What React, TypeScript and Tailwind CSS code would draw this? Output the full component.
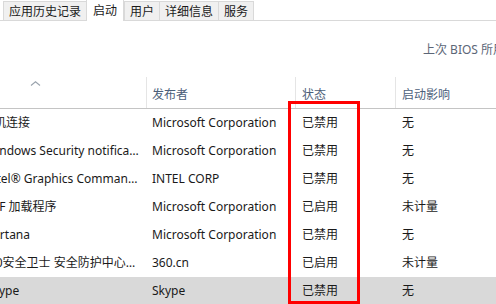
const tabs = [
  { label: "应用历史记录", active: false },
  { label: "启动", active: true },
  { label: "用户", active: false },
  { label: "详细信息", active: false },
  { label: "服务", active: false },
];

const rows = [
  { name: "手机连接", publisher: "Microsoft Corporation", status: "已禁用", impact: "无", offset: "ml-[-18px]" },
  { name: "Windows Security notification icon", publisher: "Microsoft Corporation", status: "已禁用", impact: "无", offset: "ml-[-15px]" },
  { name: "Intel® Graphics Command Center", publisher: "INTEL CORP", status: "已禁用", impact: "无", offset: "ml-[-15px]" },
  { name: "CTF 加载程序", publisher: "Microsoft Corporation", status: "已启用", impact: "未计量", offset: "ml-[-15px]" },
  { name: "Cortana", publisher: "Microsoft Corporation", status: "已禁用", impact: "无", offset: "ml-[-15px]" },
  { name: "360安全卫士 安全防护中心模块", publisher: "360.cn", status: "已启用", impact: "未计量", offset: "ml-[-18px]" },
  { name: "Skype", publisher: "Skype", status: "已禁用", impact: "无", offset: "ml-[-14px]", selected: true },
];

const font = "font-['Segoe_UI','Noto_Sans','Noto_Sans_CJK_SC',sans-serif]";

export default function App() {
  return (
    <div className={`relative w-[496px] h-[304px] overflow-hidden bg-white text-[12px] text-[#1a1a1a] ${font}`}>
      {/* tab strip */}
      <div className="flex items-end h-[21px] pl-[3px] border-b border-[#d9d9d9]">
        {tabs.map((t) =>
          t.active ? (
            <div
              key={t.label}
              className="h-[22px] mb-[-1px] px-[6px] flex items-center bg-white border-x border-t border-[#d9d9d9] leading-none"
            >
              {t.label}
            </div>
          ) : (
            <div
              key={t.label}
              className="h-[19px] px-[5px] flex items-center bg-[#f0f0f0] border-l border-t border-[#d9d9d9] last:border-r leading-none pt-[1px]"
            >
              {t.label}
            </div>
          )
        )}
      </div>

      {/* bios line */}
      <div className="h-[53px] flex items-center pl-[423px] pt-[4px] whitespace-nowrap text-[#5c6677]">
        上次 BIOS 所用时间: 0.0 秒
      </div>

      {/* header */}
      <div className="flex items-end h-[35px] border-b border-[#c4c4c4] text-[#4c607a]">
        <div className="w-[146px] h-[35px] flex justify-center pt-[8px] pl-[4px]">
          <svg width="11" height="5" viewBox="0 0 11 5" className="mr-[80px]">
            <path d="M1 4.5 L5.5 0.8 L10 4.5" fill="none" stroke="#9aa3ad" strokeWidth="1.1" />
          </svg>
        </div>
        <div className="w-[149px] h-[31px] flex items-center pl-[5px] pt-[5px] border-l border-[#e5e5e5]">发布者</div>
        <div className="w-[100px] h-[31px] flex items-center pl-[6px] pt-[5px] border-l border-[#e5e5e5]">状态</div>
        <div className="flex-1 h-[31px] flex items-center pl-[6px] pt-[5px] border-l border-[#e5e5e5]">启动影响</div>
      </div>

      {/* rows */}
      <div className="flex flex-col">
        {rows.map((r) => (
          <div key={r.name} className={`flex items-center h-[28px] ${r.selected ? "bg-[#d9d9d9]" : ""}`}>
            <div className="w-[146px] overflow-hidden">
              <div className={`${r.offset} w-[154px] whitespace-nowrap overflow-hidden text-ellipsis`}>{r.name}</div>
            </div>
            <div className="w-[149px] pl-[6px] whitespace-nowrap">{r.publisher}</div>
            <div className="w-[100px] pl-[7px]">{r.status}</div>
            <div className="flex-1 pl-[7px]">{r.impact}</div>
          </div>
        ))}
      </div>

      {/* red highlight box */}
      <div className="absolute left-[288px] top-[101px] w-[72px] h-[203px] border-[3px] border-[#ff0000]" />
    </div>
  );
}
